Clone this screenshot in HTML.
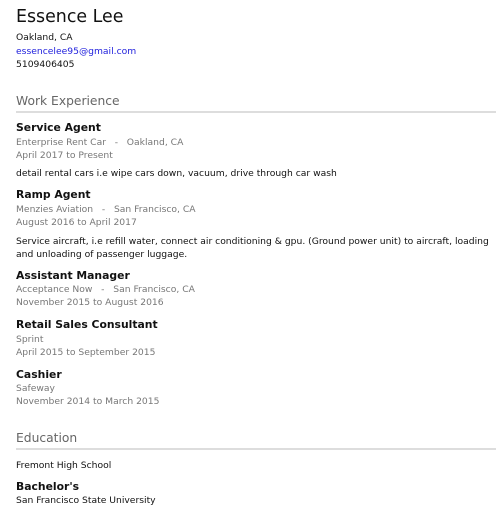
<!DOCTYPE html>
<html><head><meta charset="utf-8"><style>
body{margin:0;width:499px;height:512px;background:#fff;font-family:"DejaVu Sans","Liberation Sans",sans-serif;color:#111;position:relative;overflow:hidden}
div{position:absolute;left:16px;white-space:nowrap;line-height:13px}
.s{font-size:9.2px}
.g{color:#777}
.t{font-size:10.8px;font-weight:bold;line-height:14px}
.h{font-size:12.3px;color:#666;line-height:16px}
.r{height:2px;background:#ddd;width:480px}
</style></head><body>
<div style="top:6px;font-size:17.4px;line-height:22px;color:#111">Essence Lee</div>
<div class="s" style="top:31px">Oakland, CA</div>
<div class="s" style="top:45px;color:#2222dd">essencelee95@gmail.com</div>
<div class="s" style="top:58px">5109406405</div>
<div class="h" style="top:93px">Work Experience</div>
<div class="r" style="top:111px"></div>
<div class="t" style="top:121px">Service Agent</div>
<div class="s g" style="top:136px">Enterprise Rent Car&nbsp;&nbsp; - &nbsp;&nbsp;Oakland, CA</div>
<div class="s g" style="top:149px">April 2017 to Present</div>
<div class="s" style="top:167px">detail rental cars i.e wipe cars down, vacuum, drive through car wash</div>
<div class="t" style="top:188px">Ramp Agent</div>
<div class="s g" style="top:203px">Menzies Aviation&nbsp;&nbsp; - &nbsp;&nbsp;San Francisco, CA</div>
<div class="s g" style="top:216px">August 2016 to April 2017</div>
<div class="s" style="top:235px">Service aircraft, i.e refill water, connect air conditioning &amp; gpu. (Ground power unit) to aircraft, loading</div>
<div class="s" style="top:248px">and unloading of passenger luggage.</div>
<div class="t" style="top:269px">Assistant Manager</div>
<div class="s g" style="top:283px">Acceptance Now&nbsp;&nbsp; - &nbsp;&nbsp;San Francisco, CA</div>
<div class="s g" style="top:296px">November 2015 to August 2016</div>
<div class="t" style="top:318px">Retail Sales Consultant</div>
<div class="s g" style="top:333px">Sprint</div>
<div class="s g" style="top:346px">April 2015 to September 2015</div>
<div class="t" style="top:368px">Cashier</div>
<div class="s g" style="top:382px">Safeway</div>
<div class="s g" style="top:395px">November 2014 to March 2015</div>
<div class="h" style="top:430px">Education</div>
<div class="r" style="top:448px"></div>
<div class="s" style="top:459px">Fremont High School</div>
<div class="t" style="top:480px">Bachelor's</div>
<div class="s" style="top:494px">San Francisco State University</div>
</body></html>
